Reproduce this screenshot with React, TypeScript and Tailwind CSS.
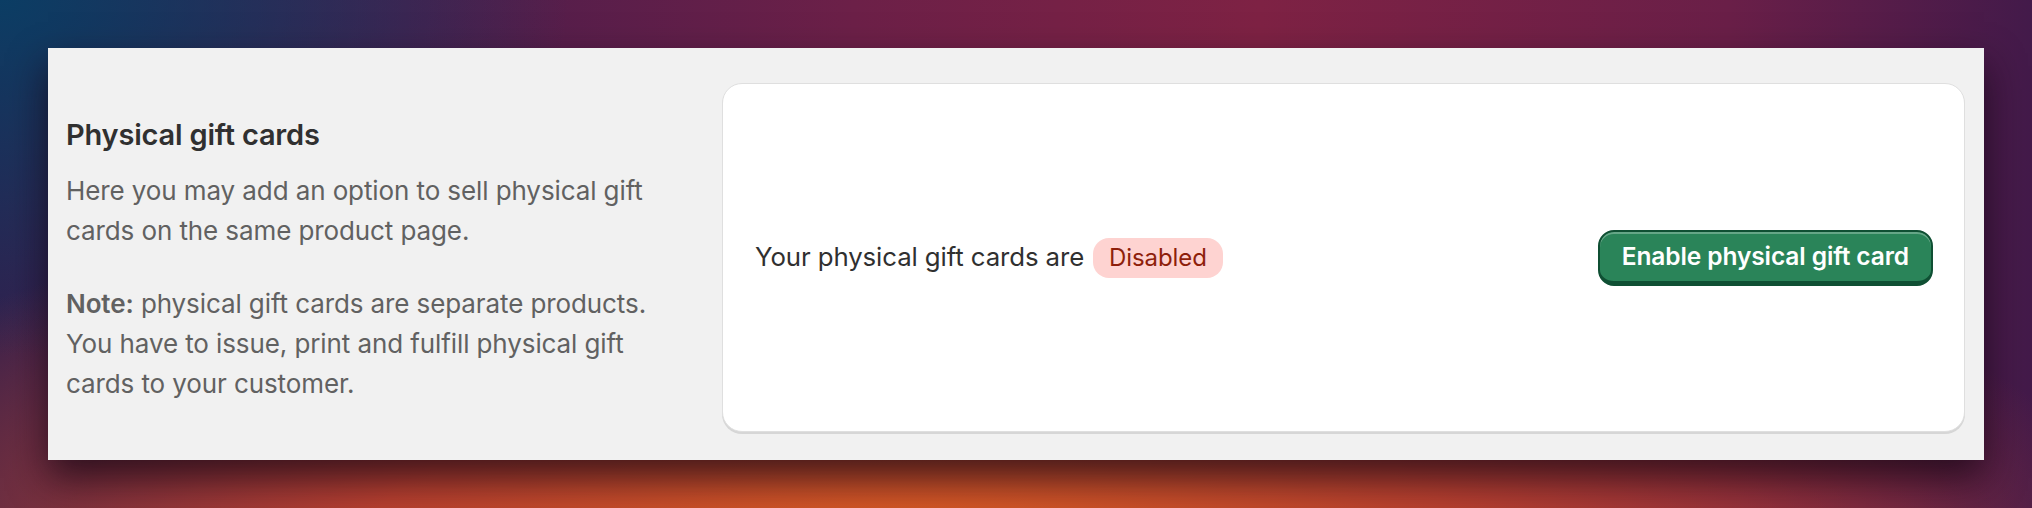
import React from "react";

export default function App() {
  return (
    <div
      className="w-[2032px] h-[508px] p-[48px] bg-[radial-gradient(ellipse_28%_70%_at_0%_0%,#0b3d64_0%,rgba(11,61,100,0)_100%),radial-gradient(ellipse_60%_75%_at_45%_108%,#dc5e22_0%,#b8402f_45%,rgba(150,40,60,0)_100%),linear-gradient(90deg,#33204e_0%,#4d1d4c_20%,#6c2048_42%,#7e2244_62%,#6a1f48_85%,#431a4a_100%)]"
      style={{ fontFamily: "Inter, 'Noto Sans', sans-serif" }}
    >
      <div className="w-full h-full bg-[#f1f1f1] flex items-stretch pt-[35px] pb-[28px] pl-[18px] pr-[19px] shadow-[0_18px_36px_rgba(20,5,20,0.75)]">
        <div className="w-[615px] shrink-0 pt-[32px] mr-[41px]">
          <h2 className="text-[29px] leading-[40px] font-semibold text-[#303030] tracking-[-0.2px]">
            Physical gift cards
          </h2>
          <div className="mt-[16px] text-[26px] leading-[40px] text-[#616161] flex flex-col gap-[33px] tracking-[-0.1px]">
            <p>Here you may add an option to sell physical gift cards on the same product page.</p>
            <p>
              <strong className="font-semibold">Note:</strong> physical gift cards are separate products. You have to issue, print and fulfill physical gift cards to your customer.
            </p>
          </div>
        </div>
        <div className="flex-1 bg-white rounded-[20px] border border-[#dfdfdf] shadow-[0_2px_0_0_#d6d6d6] flex items-center justify-between pl-[32px] pr-[31px]">
          <div className="flex items-center gap-[9px] text-[25.8px] text-[#303030] tracking-[-0.1px]">
            <span>Your physical gift cards are</span>
            <span className="h-[40px] px-[16px] rounded-[16px] bg-[#fed3d1] text-[#8e1f0b] text-[24px] flex items-center">
              Disabled
            </span>
          </div>
          <button className="h-[56px] px-[22px] rounded-[16px] bg-[#2a8459] border-2 border-[#0f4f33] border-b-[5px] text-white text-[24.5px] font-semibold shadow-[inset_0_2px_0_rgba(255,255,255,0.28)] tracking-[-0.1px]">
            Enable physical gift card
          </button>
        </div>
      </div>
    </div>
  );
}
